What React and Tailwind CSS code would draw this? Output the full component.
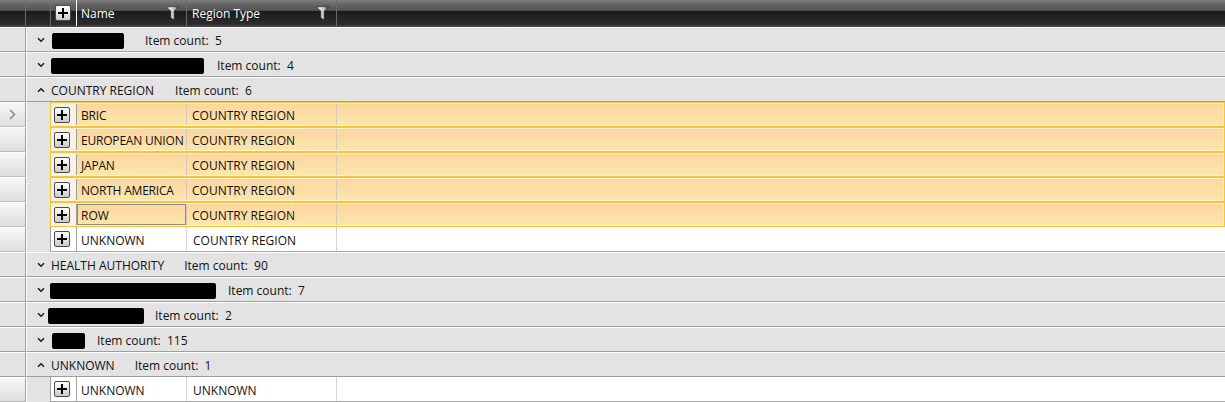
import React from "react";

function Chevron({ open }) {
  return (
    <svg width="8" height="6" viewBox="0 0 8 6" className="shrink-0 mt-[1px]">
      {open ? (
        <polyline points="1,4.8 4,1.8 7,4.8" fill="none" stroke="#1a1a1a" strokeWidth="1.5" />
      ) : (
        <polyline points="1,1.2 4,4.2 7,1.2" fill="none" stroke="#1a1a1a" strokeWidth="1.5" />
      )}
    </svg>
  );
}

function PlusBox() {
  return (
    <div className="w-[16px] h-[16px] shrink-0 border border-[#4a4a4a] rounded-[2px] bg-[linear-gradient(to_bottom,#ffffff,#e6e6e6_50%,#c9c9c9)] flex items-center justify-center">
      <svg width="10" height="10" viewBox="0 0 10 10">
        <path d="M5 0V10M0 5H10" stroke="#000" strokeWidth="2" />
      </svg>
    </div>
  );
}

function Funnel({ id }) {
  return (
    <svg width="13" height="14" viewBox="0 0 13 14" className="shrink-0">
      <defs>
        <linearGradient id={id} x1="0" x2="1" y1="0" y2="0">
          <stop offset="0" stopColor="#ffffff" />
          <stop offset="0.6" stopColor="#c8c8c8" />
          <stop offset="1" stopColor="#6a6a6a" />
        </linearGradient>
      </defs>
      <path d="M0.5 1.2 Q6.5 -0.2 12.5 1.2 L8.2 5 V13 L7.2 13.5 L4.8 11.8 V5 Z" fill={`url(#${id})`} stroke="#1a1a1a" strokeWidth="0.6" />
    </svg>
  );
}

function Header() {
  return (
    <div className="flex h-[27px] text-white text-[12px] border-b border-[#4c4c4c] bg-[linear-gradient(to_bottom,#7e7e7e_0%,#626262_20%,#555555_40%,#1b1b1b_43%,#2c2c2c_92%,#3a3a3a_100%)]">
      <div className="w-[26px] shrink-0 border-r border-[#6a6a6a]" />
      <div className="w-[25px] shrink-0 border-r border-[#6a6a6a]" />
      <div className="w-[26px] shrink-0 border-r border-white flex items-center pl-[4px]">
        <PlusBox />
      </div>
      <div className="w-[110px] shrink-0 border-r border-[#6a6a6a] flex items-center justify-between pl-[4px] pr-[7px]">
        <span className="pt-[2px]">Name</span>
        <Funnel id="f1" />
      </div>
      <div className="w-[150px] shrink-0 border-r border-[#6a6a6a] flex items-center justify-between pl-[5px] pr-[7px]">
        <span className="pt-[2px]">Region Type</span>
        <Funnel id="f2" />
      </div>
      <div className="flex-1" />
    </div>
  );
}

function Indicator({ arrow }) {
  return (
    <div className="w-[26px] shrink-0 border-r border-r-[#a0a0a0] border-t border-t-white border-b border-b-[#bcbcbc] bg-[linear-gradient(to_bottom,#f7f7f7,#dedede)] flex items-center justify-center">
      {arrow && (
        <svg width="7" height="11" viewBox="0 0 7 11">
          <polyline points="1,1 5.5,5.5 1,10" fill="none" stroke="#8a8a8a" strokeWidth="1.5" />
        </svg>
      )}
    </div>
  );
}

function DataRow({ name, region, selected, arrow, focus }) {
  if (selected) {
    return (
      <div className="flex h-[25px] text-[12px] text-[#111]">
        <Indicator arrow={arrow} />
        <div className="w-[24px] shrink-0 bg-[#e3e3e3] border-l border-white" />
        <div className="flex-1 flex border border-[#f5c43a]">
          <div className="flex-1 flex border border-[#fff2d4] bg-[linear-gradient(to_bottom,#fcd6a1,#fde5ab)]">
            <div className="w-[25px] shrink-0 flex items-center pl-[2px] border-r border-[#9c9c9c] bg-[#f7f1e6]">
              <PlusBox />
            </div>
            <div className="w-[110px] shrink-0 border-r border-[#d2cabd] flex overflow-hidden">
              {focus ? (
                <div className="flex-1 flex items-center border border-[#8c8c8c] pl-[3px] whitespace-nowrap"><span className="pt-[2px]">{name}</span></div>
              ) : (
                <div className="flex-1 flex items-center pl-[4px] whitespace-nowrap"><span className="pt-[2px] tracking-[-0.2px]">{name}</span></div>
              )}
            </div>
            <div className="w-[150px] shrink-0 border-r border-[#d2cabd] flex items-center pl-[5px] whitespace-nowrap"><span className="pt-[2px]">{region}</span></div>
            <div className="flex-1" />
          </div>
        </div>
      </div>
    );
  }
  return (
    <div className="flex h-[25px] text-[12px] text-[#111]">
      <Indicator />
      <div className="w-[24px] shrink-0 bg-[#e3e3e3] border-l border-white" />
      <div className="flex-1 flex bg-white border-l border-[#a0a0a0] border-b border-b-[#a8a8a8]">
        <div className="w-[26px] shrink-0 flex items-center pl-[3px] border-r border-[#a4a4a4]">
          <PlusBox />
        </div>
        <div className="w-[110px] shrink-0 border-r border-[#d4d4d4] flex items-center pl-[4px] whitespace-nowrap"><span className="pt-[3px]">{name}</span></div>
        <div className="w-[150px] shrink-0 border-r border-[#d4d4d4] flex items-center pl-[6px] whitespace-nowrap"><span className="pt-[3px]">{region}</span></div>
        <div className="flex-1" />
      </div>
    </div>
  );
}

function G({ open, label, box, gap, count }) {
  return (
    <div className="flex h-[25px]">
      <div className="w-[26px] shrink-0 bg-[#e3e3e3] border-t border-t-white border-b border-b-[#9e9e9e] border-r border-r-[#9e9e9e]" />
      <div className="flex-1 flex items-center bg-[#e3e3e3] border-t border-t-white border-b border-b-[#9e9e9e] border-l border-l-white pl-[10px] text-[12px] text-[#111]">
        <Chevron open={open} />
        {box ? (
          <div className={`${box} h-[16px] mt-[2px] bg-black rounded-[2px] shrink-0`} />
        ) : (
          <span className="ml-[6px] pt-[2px] whitespace-pre">{label}</span>
        )}
        <span className={`${gap} pt-[2px] whitespace-pre`}>{`Item count:  ${count}`}</span>
      </div>
    </div>
  );
}

export default function App() {
  return (
    <div className="w-[1225px] h-[402px] overflow-hidden bg-[#a0a0a0] font-['Open_Sans',sans-serif] leading-none">
      <Header />
      <G box="ml-[7px] w-[72px]" gap="ml-[21px]" count="5" />
      <G box="ml-[6px] w-[153px]" gap="ml-[13px]" count="4" />
      <G open label="COUNTRY REGION" gap="ml-[21px]" count="6" />
      <DataRow selected arrow name="BRIC" region="COUNTRY REGION" />
      <DataRow selected name="EUROPEAN UNION" region="COUNTRY REGION" />
      <DataRow selected name="JAPAN" region="COUNTRY REGION" />
      <DataRow selected name="NORTH AMERICA" region="COUNTRY REGION" />
      <DataRow selected focus name="ROW" region="COUNTRY REGION" />
      <DataRow name="UNKNOWN" region="COUNTRY REGION" />
      <G label="HEALTH AUTHORITY" gap="ml-[20px]" count="90" />
      <G box="ml-[5px] w-[166px]" gap="ml-[12px]" count="7" />
      <G box="ml-[3px] w-[96px]" gap="ml-[11px]" count="2" />
      <G box="ml-[7px] w-[33px]" gap="ml-[12px]" count="115" />
      <G open label="UNKNOWN" gap="ml-[20px]" count="1" />
      <DataRow name="UNKNOWN" region="UNKNOWN" />
    </div>
  );
}
